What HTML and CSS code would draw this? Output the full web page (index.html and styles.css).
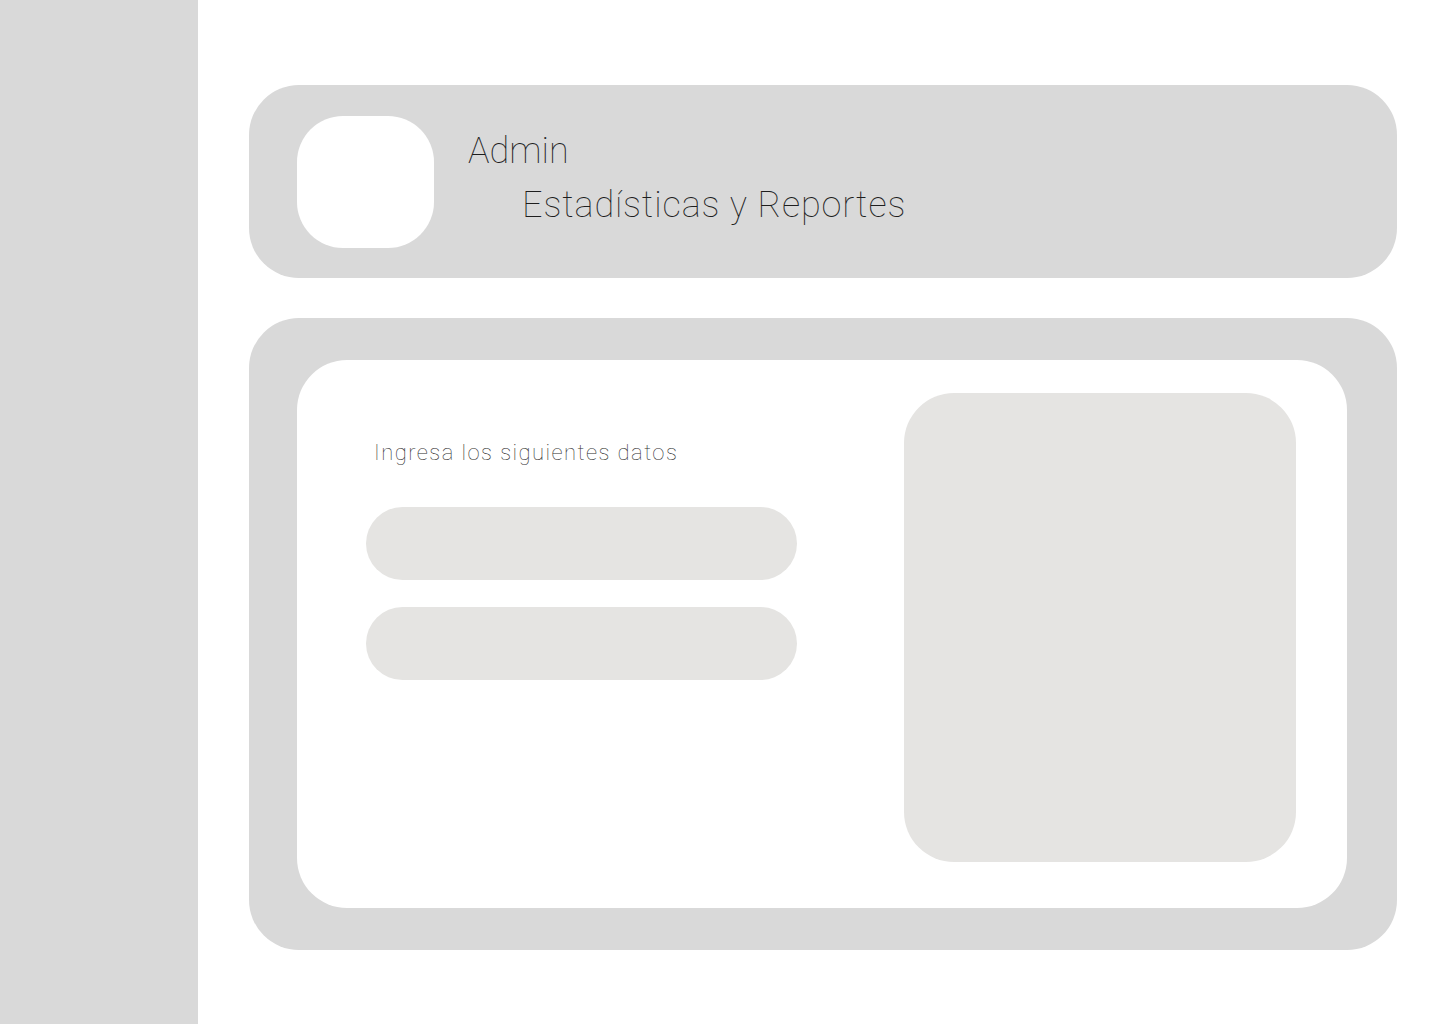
FILE: index.html
```html
<!DOCTYPE html>
<html lang="es">
<head>
    <meta charset="UTF-8">
    <title>Estadísticas y Reportes</title>
    <link rel="stylesheet" href="styles.css">
</head>
<body>
<div class="layout">
    <aside class="sidebar"></aside>

    <main class="content">
        <section class="header-card">
            <div class="avatar"></div>
            <div class="header-text">
                <div class="user-name">Admin</div>
                <div class="page-title">Estadísticas y Reportes</div>
            </div>
        </section>

        <section class="main-card">
            <div class="panel">
                <div class="form-col">
                    <p class="form-label">Ingresa los siguientes datos</p>
                    <div class="field"></div>
                    <div class="field"></div>
                </div>
                <div class="preview"></div>
            </div>
        </section>
    </main>
</div>
</body>
</html>
```

FILE: styles.css
```css
body {
    margin: 0;
    background: #fff;
    font-family: Roboto, "Liberation Sans", sans-serif;
    color: #1e1e1e;
}

.layout {
    display: flex;
    min-height: 1024px;
}

.sidebar {
    width: 198px;
    flex-shrink: 0;
    background: #d9d9d9;
}

.content {
    flex: 1;
    padding: 85px 43px 0 51px;
    display: flex;
    flex-direction: column;
    gap: 40px;
}

.header-card {
    height: 193px;
    box-sizing: border-box;
    background: #d9d9d9;
    border-radius: 50px;
    padding: 31px 48px 0;
    display: flex;
    align-items: flex-start;
    gap: 34px;
}

.avatar {
    width: 137px;
    height: 132px;
    background: #fff;
    border-radius: 46px;
    flex-shrink: 0;
}

.header-text {
    padding-top: 11px;
}

.user-name {
    font-size: 36px;
    font-weight: 100;
    line-height: 48px;
    letter-spacing: 0;
}

.page-title {
    font-size: 36px;
    font-weight: 100;
    line-height: 48px;
    margin-top: 6px;
    padding-left: 54px;
    letter-spacing: 0.9px;
}

.main-card {
    height: 632px;
    box-sizing: border-box;
    background: #d9d9d9;
    border-radius: 50px;
    padding: 42px 50px 42px 48px;
}

.panel {
    height: 100%;
    box-sizing: border-box;
    background: #fff;
    border-radius: 50px;
    padding: 33px 51px 0 69px;
    display: flex;
    justify-content: space-between;
    align-items: flex-start;
}

.form-col {
    width: 431px;
}

.form-label {
    margin: 44px 0 0 8px;
    font-size: 22px;
    font-weight: 100;
    line-height: 32px;
    letter-spacing: 1.45px;
    color: #2e2e2e;
}

.field {
    height: 73px;
    background: #e5e4e2;
    border-radius: 37px;
    margin-top: 27px;
}

.form-col .form-label + .field {
    margin-top: 38px;
}

.preview {
    width: 392px;
    height: 469px;
    background: #e5e4e2;
    border-radius: 50px;
}
```
